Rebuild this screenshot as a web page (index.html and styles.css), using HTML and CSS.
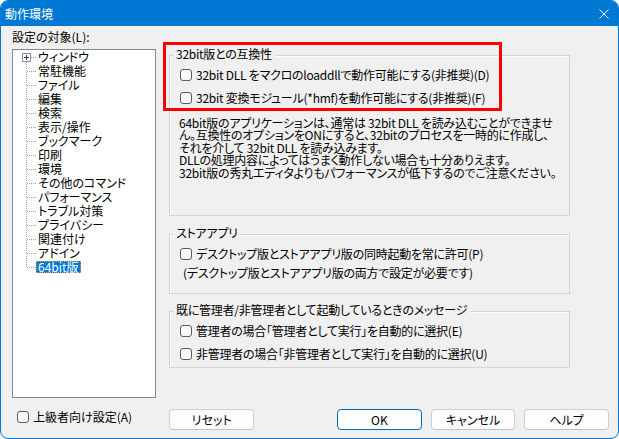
FILE: index.html
```html
<!DOCTYPE html>
<html lang="ja">
<head>
<meta charset="utf-8">
<title>動作環境</title>
<link rel="stylesheet" href="styles.css">
</head>
<body>
<div class="window">
  <div class="titlebar">
    <span class="title">動作環境</span>
    <svg class="close" width="10" height="10" viewBox="0 0 10 10"><path d="M0.5 0.5L9.5 9.5M9.5 0.5L0.5 9.5" stroke="#fff" stroke-width="1" fill="none"/></svg>
  </div>
  <div class="client">
    <div class="main">
      <div class="left">
        <div class="label">設定の対象(L):</div>
        <div class="tree">
          <ul class="tree-list">
            <li class="item"><span class="stub first"><svg class="plus" width="9" height="9" viewBox="0 0 9 9"><rect x="0.5" y="0.5" width="8" height="8" fill="#fff" stroke="#919191"/><path d="M2 4.5H7M4.5 2V7" stroke="#1c3c8c" fill="none"/></svg></span><span class="name">ウィンドウ</span></li>
            <li class="item"><span class="stub"></span><span class="name">常駐機能</span></li>
            <li class="item"><span class="stub"></span><span class="name">ファイル</span></li>
            <li class="item"><span class="stub"></span><span class="name">編集</span></li>
            <li class="item"><span class="stub"></span><span class="name">検索</span></li>
            <li class="item"><span class="stub"></span><span class="name">表示/操作</span></li>
            <li class="item"><span class="stub"></span><span class="name">ブックマーク</span></li>
            <li class="item"><span class="stub"></span><span class="name">印刷</span></li>
            <li class="item"><span class="stub"></span><span class="name">環境</span></li>
            <li class="item"><span class="stub"></span><span class="name">その他のコマンド</span></li>
            <li class="item"><span class="stub"></span><span class="name">パフォーマンス</span></li>
            <li class="item"><span class="stub"></span><span class="name">トラブル対策</span></li>
            <li class="item"><span class="stub"></span><span class="name">プライバシー</span></li>
            <li class="item"><span class="stub"></span><span class="name">関連付け</span></li>
            <li class="item"><span class="stub"></span><span class="name">アドイン</span></li>
            <li class="item"><span class="stub"></span><span class="name selected">64bit版</span></li>
          </ul>
        </div>
      </div>
      <div class="right">
        <div class="group g1">
          <div class="legend">32bit版との互換性</div>
          <div class="check row-first"><span class="box"></span><span class="text">32bit DLL をマクロのloaddllで動作可能にする(非推奨)(D)</span></div>
          <div class="check row-next"><span class="box"></span><span class="text">32bit 変換モジュール(*hmf)を動作可能にする(非推奨)(F)</span></div>
          <p class="note">64bit版のアプリケーションは、通常は 32bit DLL を読み込むことができませ<br>ん。互換性のオプションをONにすると、32bitのプロセスを一時的に作成し、<br>それを介して 32bit DLL を読み込みます。<br>DLLの処理内容によってはうまく動作しない場合も十分ありえます。<br>32bit版の秀丸エディタよりもパフォーマンスが低下するのでご注意ください。</p>
        </div>
        <div class="group g2">
          <div class="legend">ストアアプリ</div>
          <div class="check row-first"><span class="box"></span><span class="text">デスクトップ版とストアアプリ版の同時起動を常に許可(P)</span></div>
          <div class="hint">(デスクトップ版とストアアプリ版の両方で設定が必要です)</div>
        </div>
        <div class="group g3">
          <div class="legend">既に管理者/非管理者として起動しているときのメッセージ</div>
          <div class="check row-first"><span class="box"></span><span class="text">管理者の場合「管理者として実行」を自動的に選択(E)</span></div>
          <div class="check row-next"><span class="box"></span><span class="text">非管理者の場合「非管理者として実行」を自動的に選択(U)</span></div>
        </div>
      </div>
    </div>
    <div class="footer">
      <div class="check adv"><span class="box"></span><span class="text">上級者向け設定(A)</span></div>
      <div class="button">リセット</div>
      <div class="button default ok">OK</div>
      <div class="button">キャンセル</div>
      <div class="button">ヘルプ</div>
    </div>
  </div>
  <div class="annotation"></div>
</div>
</body>
</html>
```
FILE: styles.css
```css
* {
  box-sizing: border-box;
}

html,
body {
  margin: 0;
  padding: 0;
  background: #ffffff;
}

body {
  font-family: "Noto Sans CJK JP", "Noto Sans", sans-serif;
  font-size: 12px;
  color: #000000;
  font-feature-settings: "palt";
}

.window {
  position: relative;
  width: 619px;
  height: 439px;
  border: 1px solid #0078d4;
  border-radius: 8px;
  background: #f0f0f0;
  overflow: hidden;
  display: flex;
  flex-direction: column;
}

.titlebar {
  flex: none;
  height: 25px;
  background: #0078d4;
  color: #ffffff;
  display: flex;
  align-items: center;
  justify-content: space-between;
  padding: 0 9px 0 4px;
}

.title {
  line-height: 14px;
  font-feature-settings: normal;
}

.close {
  display: block;
}

.client {
  flex: 1;
  display: flex;
  flex-direction: column;
  padding: 4px 0 0 11px;
}

.main {
  display: flex;
  gap: 13px;
  height: 368px;
}

.left {
  width: 144px;
  display: flex;
  flex-direction: column;
}

.label {
  height: 14px;
  line-height: 14px;
}

.tree {
  margin-top: 5px;
  height: 349px;
  background: #ffffff;
  border: 1px solid #828790;
}

.tree-list {
  list-style: none;
  margin: 0;
  padding: 0;
  background: repeating-linear-gradient(to bottom, #a0a0a0 0 1px, transparent 1px 2px) 13px 12px / 1px 205px no-repeat;
}

.item {
  display: flex;
  align-items: center;
  height: 14px;
}

.stub {
  flex: none;
  width: 23px;
  height: 14px;
  background: repeating-linear-gradient(to right, #a0a0a0 0 1px, transparent 1px 2px) 14px 7px / 9px 1px no-repeat;
}

.stub.first {
  background-position: 18px 7px;
  background-size: 5px 1px;
}

.plus {
  display: block;
  margin: 3px 0 0 9px;
}

.name {
  display: inline-block;
  white-space: nowrap;
  line-height: 10px;
  padding: 0 1px;
  border: 1px solid transparent;
}

.name.selected {
  background: #0078d7;
  color: #ffffff;
  border: 1px dotted #f0a030;
}

.right {
  width: 401px;
  padding-top: 25px;
  display: flex;
  flex-direction: column;
  letter-spacing: -0.25px;
}

.group {
  display: flex;
  flex-direction: column;
  border: 1px solid #d5d5d5;
  box-shadow: inset 1px 1px 0 #ffffff;
}

.g1 {
  height: 161px;
}

.g2 {
  margin-top: 18px;
  height: 60px;
}

.g3 {
  margin-top: 17px;
  height: 57px;
}

.legend {
  align-self: flex-start;
  margin: -9px 0 0 3px;
  padding: 0 3px;
  height: 14px;
  line-height: 14px;
  background: #f0f0f0;
  white-space: nowrap;
}

.check {
  display: flex;
  align-items: center;
  gap: 4px;
  height: 20px;
  margin-left: 10px;
  line-height: 14px;
  white-space: nowrap;
}

.row-first {
  margin-top: 4px;
}

.row-next {
  margin-top: 3px;
}

.box {
  flex: none;
  width: 12px;
  height: 12px;
  border: 1px solid #5c5c5c;
  border-radius: 3px;
  background: #f9f9f9;
}

.note {
  margin: 9px 0 0 9px;
  line-height: 12.4px;
  white-space: nowrap;
}

.hint {
  margin: 2px 0 0 13px;
  height: 14px;
  line-height: 14px;
  white-space: nowrap;
}

.footer {
  display: flex;
  align-items: flex-start;
  margin-top: 11px;
  height: 21px;
}

.check.adv {
  width: 153px;
  height: 14px;
  margin: 1px 0 0 5px;
}

.button {
  width: 85px;
  height: 21px;
  line-height: 19px;
  text-align: center;
  background: #fdfdfd;
  border: 1px solid #d0d0d0;
  border-bottom-color: #c2c2c2;
  border-radius: 4px;
  margin-right: 9px;
}

.button.ok {
  margin-left: 74px;
}

.button.default {
  border: 1px solid #0067c0;
}

.annotation {
  position: absolute;
  left: 162px;
  top: 41px;
  width: 339px;
  height: 69px;
  border: 3px solid #ff0000;
  pointer-events: none;
}
```
